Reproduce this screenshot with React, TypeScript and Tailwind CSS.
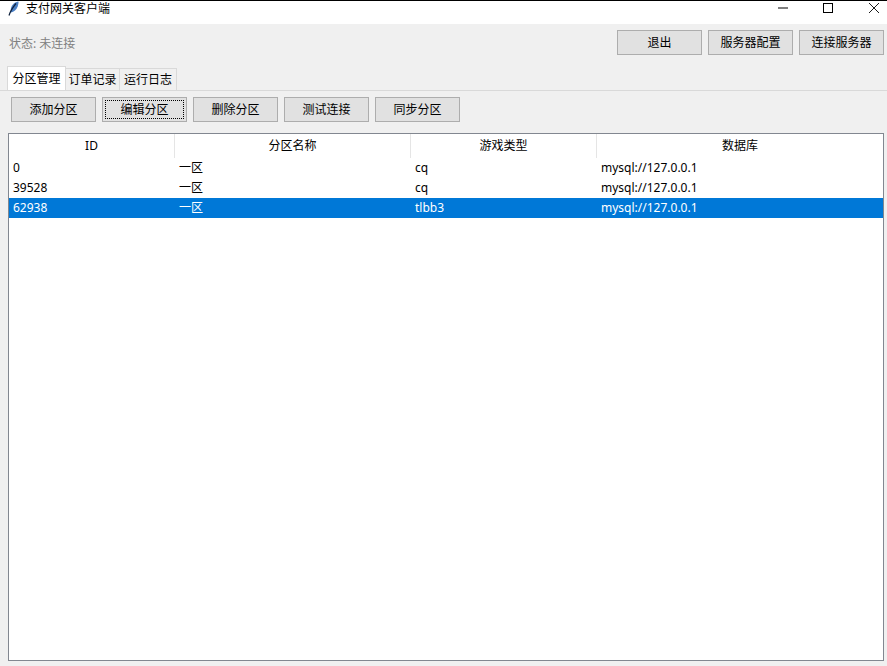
import React from 'react';

const font = "font-['Noto_Sans','Noto_Sans_CJK_SC',sans-serif]";

const columns = [
  { title: 'ID', width: 'w-[166px]' },
  { title: '分区名称', width: 'w-[236px]' },
  { title: '游戏类型', width: 'w-[186px]' },
  { title: '数据库', width: 'flex-1' },
];

const rows = [
  { id: '0', name: '一区', game: 'cq', db: 'mysql://127.0.0.1' },
  { id: '39528', name: '一区', game: 'cq', db: 'mysql://127.0.0.1' },
  { id: '62938', name: '一区', game: 'tlbb3', db: 'mysql://127.0.0.1', selected: true },
];

function TkButton({ label, focused }: { label: string; focused?: boolean }) {
  return (
    <button className="w-[85px] h-[25px] p-[2px] bg-[#e1e1e1] border border-[#adadad] text-[12px] leading-none text-black">
      <span
        className={`flex h-full w-full items-center justify-center ${focused ? 'border border-dotted border-black' : ''}`}
      >
        {label}
      </span>
    </button>
  );
}

function Tab({ label, active, width }: { label: string; active?: boolean; width: string }) {
  return active ? (
    <div className={`${width} h-[24px] bg-white border border-b-0 border-[#d9d9d9] flex items-center justify-center text-[12px] leading-none text-black`}>
      {label}
    </div>
  ) : (
    <div className={`${width} h-[22px] pt-[1px] -ml-px bg-[#f0f0f0] border border-b-0 border-[#d9d9d9] flex items-center justify-center text-[12px] leading-none text-black`}>
      {label}
    </div>
  );
}

export default function App() {
  return (
    <div className={`${font} w-[887px] h-[666px] flex flex-col bg-[#f0f0f0] overflow-hidden`}>
      <div className="h-[24px] bg-white border-t border-black flex items-start shrink-0">
        <svg className="ml-[7px] mt-[0px] w-[13px] h-[15px]" viewBox="0 0 13 15">
          <path d="M11.5 0.5C8 0.8 5 3.5 4 7C3.5 9 3.5 10.5 4 11.5C7 11 9.5 8.5 10.7 5.5C11.3 3.5 11.6 2 11.5 0.5Z" fill="#4a7fc4" />
          <path d="M9 2.5C6.5 5.5 3.5 9.5 2 14.5" stroke="#10223f" strokeWidth="1.2" fill="none" />
        </svg>
        <span className="ml-[6px] mt-[1px] text-[12px] leading-[14px] text-black">支付网关客户端</span>
        <div className="ml-auto flex items-start">
          <svg className="mt-[6px] w-[10px] h-[2px] mr-[35px]" viewBox="0 0 10 2">
            <rect width="10" height="1" y="0.5" fill="#000" />
          </svg>
          <svg className="mt-[2px] w-[10px] h-[10px] mr-[36px]" viewBox="0 0 10 10">
            <rect x="0.5" y="0.5" width="9" height="9" fill="none" stroke="#000" />
          </svg>
          <svg className="mt-[2px] w-[10px] h-[10px] mr-[8px]" viewBox="0 0 10 10">
            <path d="M0 0L10 10M10 0L0 10" stroke="#000" strokeWidth="0.9" />
          </svg>
        </div>
      </div>

      <div className="h-[37px] pt-[6px] flex items-start shrink-0">
        <span className="ml-[9px] mt-[5px] text-[12px] text-[#808080]">状态: 未连接</span>
        <div className="ml-auto mr-[3px] flex gap-[6px]">
          <TkButton label="退出" />
          <TkButton label="服务器配置" />
          <TkButton label="连接服务器" />
        </div>
      </div>

      <div className="h-[30px] pl-[7px] flex items-end border-b border-[#d9d9d9] shrink-0">
        <Tab label="分区管理" active width="w-[59px]" />
        <Tab label="订单记录" width="w-[55px]" />
        <Tab label="运行日志" width="w-[58px]" />
      </div>

      <div className="pt-[6px] pl-[11px] flex gap-[6px] shrink-0">
        <TkButton label="添加分区" />
        <TkButton label="编辑分区" focused />
        <TkButton label="删除分区" />
        <TkButton label="测试连接" />
        <TkButton label="同步分区" />
      </div>

      <div className="mt-[11px] ml-[8px] w-[876px] h-[528px] bg-white border border-[#828790] shrink-0">
        <div className="h-[24px] flex">
          {columns.map((col) => (
            <div
              key={col.title}
              className={`${col.width} flex items-center justify-center border-r border-[#e5e5e5] text-[12px] leading-none text-black last:border-r-0`}
            >
              {col.title}
            </div>
          ))}
        </div>
        {rows.map((row) => (
          <div
            key={row.id}
            className={`h-[20px] flex items-center text-[12px] leading-none ${row.selected ? 'bg-[#0078d7] text-white' : 'text-black'}`}
          >
            <div className="w-[166px] pl-[4px]">{row.id}</div>
            <div className="w-[236px] pl-[4px]">{row.name}</div>
            <div className="w-[186px] pl-[4px]">{row.game}</div>
            <div className="flex-1 pl-[4px]">{row.db}</div>
          </div>
        ))}
      </div>
    </div>
  );
}
